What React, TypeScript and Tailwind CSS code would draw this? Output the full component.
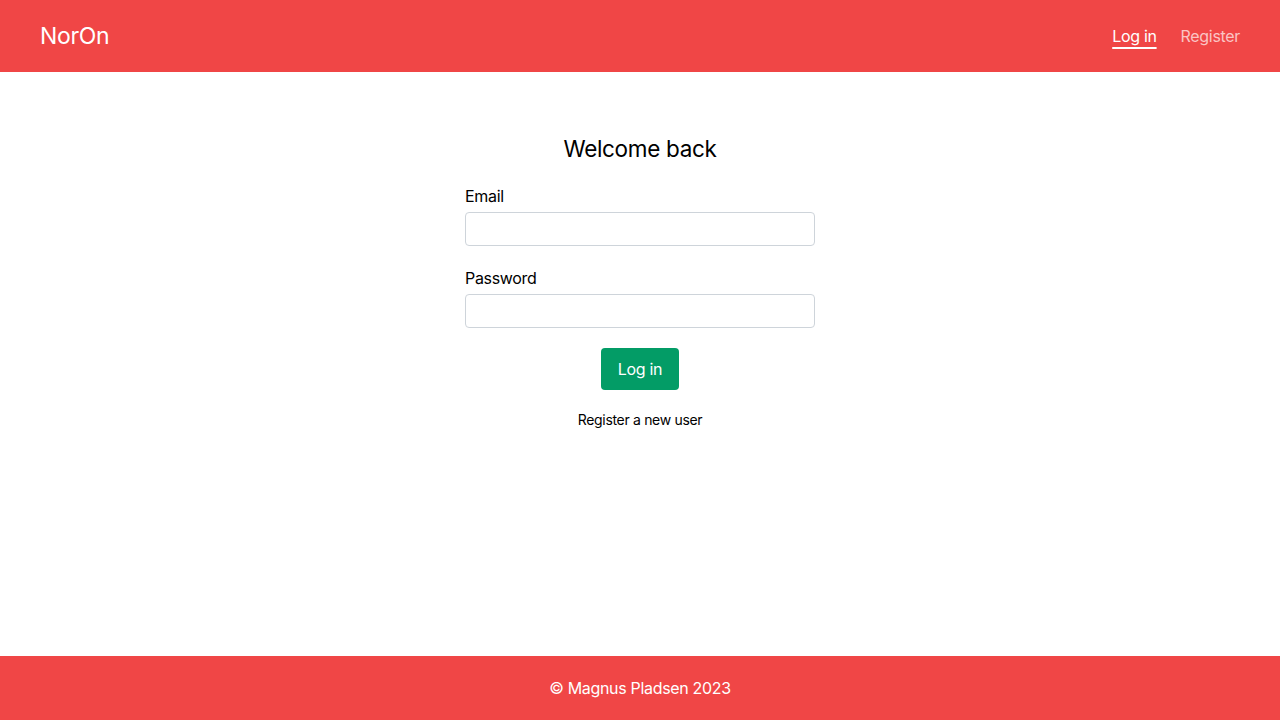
import React from "react";

export default function App() {
  return (
    <div className="min-h-screen flex flex-col bg-white text-black tracking-[-0.02em]" style={{ fontFamily: "Inter, 'Noto Sans', sans-serif" }}>
      <header className="h-[72px] bg-[#f04646] flex items-center justify-between px-10">
        <div className="text-[23px] text-white leading-none">NorOn</div>
        <nav className="flex items-center gap-6 text-base">
          <a className="text-white underline decoration-2 underline-offset-[5px]">Log in</a>
          <a className="text-[#fbc4c4]">Register</a>
        </nav>
      </header>
      <main className="flex-1 flex flex-col items-center pt-[62px]">
        <h1 className="text-[22.5px] leading-[30px] mb-[20px]">Welcome back</h1>
        <div className="w-[350px] flex flex-col">
          <label className="text-base leading-6 mb-1">Email</label>
          <input type="email" className="h-[34px] border border-[#ced4da] rounded-[4px] mb-[20px]" />
          <label className="text-base leading-6 mb-1">Password</label>
          <input type="password" className="h-[34px] border border-[#ced4da] rounded-[4px]" />
        </div>
        <button className="mt-5 h-[42px] px-[17px] bg-[#039c66] text-white rounded-[4px] text-base">Log in</button>
        <a className="mt-[20px] text-sm leading-5">Register a new user</a>
      </main>
      <footer className="h-16 bg-[#f04646] flex items-center justify-center text-white text-base">
        © Magnus Pladsen 2023
      </footer>
    </div>
  );
}
